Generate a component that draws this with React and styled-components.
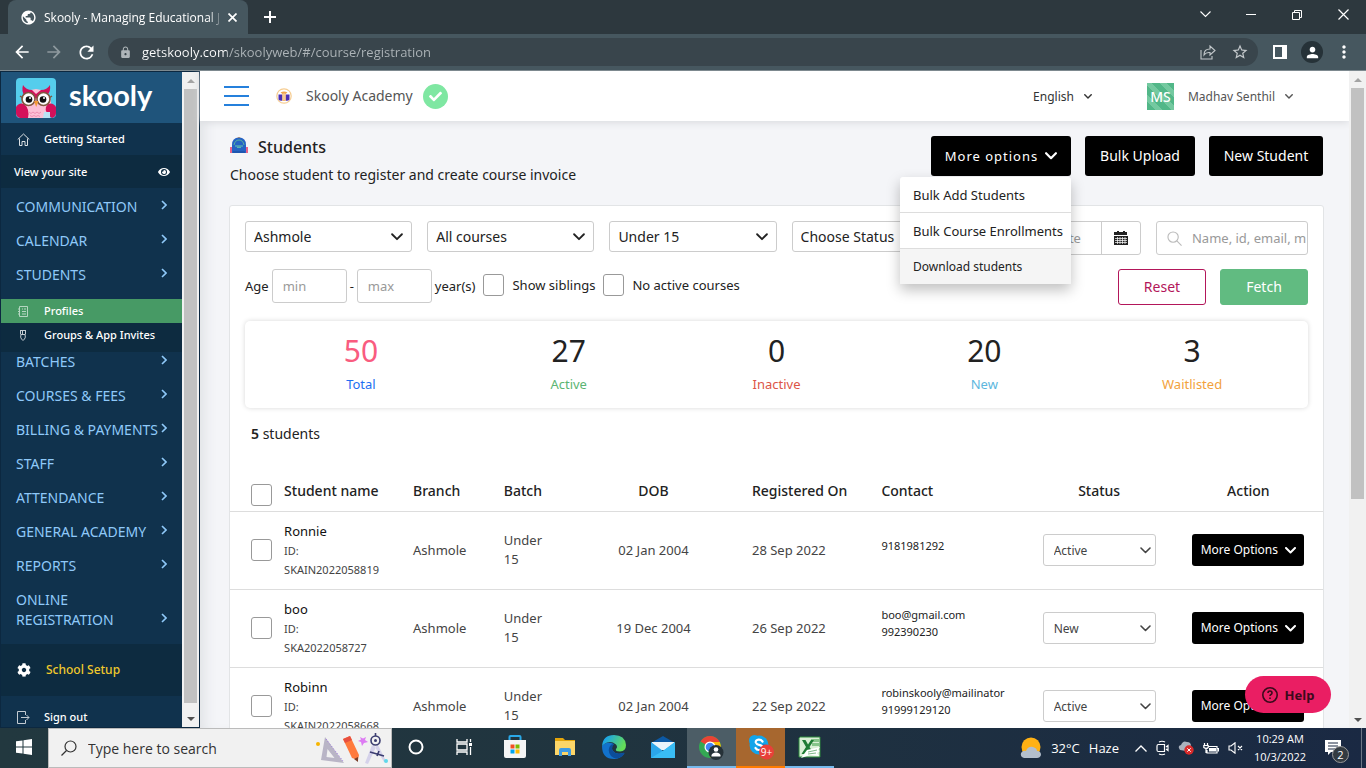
import React from "react";
import styled, { createGlobalStyle, css } from "styled-components";
import {
  MdArrowBack,
  MdArrowForward,
  MdRefresh,
  MdLock,
  MdPublic,
  MdStarBorder,
  MdMoreVert,
  MdPerson,
} from "react-icons/md";
import { FaEye, FaCog, FaCheck } from "react-icons/fa";

const GlobalStyle = createGlobalStyle`
  *, *::before, *::after { box-sizing: border-box; }
  body {
    margin: 0;
    overflow: hidden;
    font-family: "Noto Sans", sans-serif;
    font-size: 13px;
    color: #222;
  }
  button, input, select { font: inherit; color: inherit; margin: 0; }
  button { cursor: pointer; border: 0; background: none; padding: 0; }
  a { color: inherit; text-decoration: none; }
  svg { display: block; flex: none; }
`;

const Desktop = styled.div`
  height: 100vh;
  display: flex;
  flex-direction: column;
  overflow: hidden;
`;

/* ---------- browser frame ---------- */

const systemFont = css`
  font-family: "Open Sans", sans-serif;
`;

const TabStrip = styled.header`
  ${systemFont}
  flex: none;
  height: 34px;
  padding-left: 8px;
  display: flex;
  align-items: stretch;
  background: #2d383e;
  color: #fff;
`;

const Tab = styled.div`
  width: 240px;
  padding: 0 10px 0 12px;
  display: flex;
  align-items: center;
  gap: 7px;
  font-size: 12px;
  background: #46575f;
  border-radius: 8px 8px 0 0;
`;

const TabTitle = styled.span`
  flex: 1;
  overflow: hidden;
  white-space: nowrap;
  mask-image: linear-gradient(90deg, #000 164px, transparent 180px);
`;

const FrameButton = styled.button`
  width: ${(p) => p.$w || 46}px;
  display: flex;
  align-items: center;
  justify-content: center;
  color: ${(p) => p.$color || "#fff"};
`;

const WindowButtons = styled.div`
  margin-left: auto;
  display: flex;
  height: 29px;
`;

const Toolbar = styled.div`
  flex: none;
  height: 37px;
  padding: 0 6px 0 6px;
  display: flex;
  align-items: center;
  background: #46575f;
  border-bottom: 1px solid #7d898f;
`;

const AddressBar = styled.label`
  ${systemFont}
  flex: 1;
  height: 28px;
  margin: 0 6px 0 6px;
  padding: 0 2px 0 11px;
  display: flex;
  align-items: center;
  gap: 10px;
  border-radius: 14px;
  background: #39454c;
  color: #aeb5b9;
`;

const AddressInput = styled.input`
  flex: 1;
  min-width: 0;
  border: 0;
  padding: 0;
  outline: 0;
  font-size: 13px;
  color: transparent;
  background: linear-gradient(90deg, #fff 85px, #aeb5b9 85px);
  background-clip: text;
`;

const AddressActions = styled.span`
  display: flex;
`;

const ProfileDisc = styled.span`
  width: 22px;
  height: 22px;
  display: grid;
  place-items: center;
  border-radius: 50%;
  background: #263238;
`;

/* ---------- page ---------- */

const Viewport = styled.div`
  flex: 1;
  min-height: 0;
  display: flex;
  position: relative;
  overflow: hidden;
  background: #f4f5f8;
`;

const SidebarFrame = styled.aside`
  flex: none;
  width: 200px;
  display: flex;
  border: 1px solid #0c2840;
  background: #10324d;
`;

const SidebarScroll = styled.nav`
  flex: 1;
  min-width: 0;
  overflow: hidden;
  color: #fff;
`;

const Brand = styled.a`
  height: 51px;
  padding: 0 15px;
  display: flex;
  align-items: center;
  gap: 13px;
  background: #1f547b;
  font-family: Lato, sans-serif;
  font-size: 29px;
  font-weight: 700;
  line-height: 40px;
  color: #fff;
`;

const BrandName = styled.span`
  padding-bottom: 6px;
`;

const SideLink = styled.a`
  height: ${(p) => p.$h || 32}px;
  padding: 0 12px 0 ${(p) => p.$pad || 16}px;
  display: flex;
  align-items: center;
  gap: ${(p) => p.$gap || 15}px;
  font-size: ${(p) => p.$size || 11}px;
  line-height: 16px;
  font-weight: 500;
  color: ${(p) => p.$color || "#fff"};
  background: ${(p) => p.$bg || "transparent"};
`;

const SideIcon = styled.span`
  width: 12px;
  display: flex;
  justify-content: center;
`;

const Spread = styled.span`
  flex: 1;
`;

const Menu = styled.div`
  padding-top: 9px;
`;

const MenuGroup = styled.button`
  width: 100%;
  padding: 0 15px 14px 15px;
  display: flex;
  align-items: flex-end;
  justify-content: space-between;
  text-align: left;
  font-size: 14px;
  line-height: 20px;
  white-space: nowrap;
  color: #8fc9f9;

  svg { margin-bottom: 7px; }
`;

const MenuLabel = styled.span`
  width: 128px;
  white-space: ${(p) => (p.$wrap ? "normal" : "nowrap")};
`;

const SubMenu = styled.div`
  padding-bottom: 5px;
  background: #0d2b40;
`;

const Track = styled.div`
  flex: none;
  width: 17px;
  display: flex;
  flex-direction: column;
  align-items: center;
  justify-content: space-between;
  background: #f1f1f1;
`;

const Thumb = styled.div`
  width: 13px;
  flex: 0 0 ${(p) => p.$size};
  margin-bottom: auto;
  background: #c1c1c1;
`;

const TrackEnd = styled.span`
  height: 17px;
  display: grid;
  place-items: center;
`;

const Main = styled.main`
  flex: 1;
  min-width: 0;
  box-shadow: inset 12px 0 14px -8px #dfe1e4;
`;

const TopBar = styled.header`
  height: 50px;
  padding: 0 56px 0 24px;
  display: flex;
  align-items: center;
  background: #fff;
  box-shadow: 0 1px 8px #d5d7da;
`;

const Academy = styled.div`
  margin-left: 27px;
  display: flex;
  align-items: center;
  gap: 14px;
  font-size: 14px;
  line-height: 18px;
  color: #555;
`;

const Verified = styled.span`
  width: 25px;
  height: 25px;
  margin-left: -4px;
  display: grid;
  place-items: center;
  border-radius: 50%;
  background: #7fe7a2;
  color: #fff;
`;

const TopChoice = styled.button`
  display: flex;
  align-items: center;
  gap: 10px;
  font-size: 12px;
  color: ${(p) => p.$color};
`;

const Avatar = styled.span`
  width: 27px;
  height: 27px;
  margin: 0 14px 0 55px;
  display: grid;
  place-items: center;
  font-size: 14px;
  font-weight: 500;
  color: #fff;
  background: repeating-linear-gradient(45deg, #52b788 0 6px, #74c9a0 6px 11px);
`;

const Page = styled.div`
  padding: 15px 25px 0 29px;
`;

const PageHead = styled.div`
  height: 69px;
  padding: 0 1px;
  display: flex;
  justify-content: space-between;
`;

const Title = styled.h1`
  margin: 0;
  display: flex;
  align-items: center;
  gap: 10px;
  font-size: 16px;
  line-height: 22px;
  font-weight: 500;

  svg { margin-bottom: 4px; }
`;

const Subtitle = styled.p`
  margin: 6px 0 0;
  font-size: 14px;
  line-height: 22px;
`;

const HeadActions = styled.div`
  display: flex;
  align-items: flex-start;
  gap: 14px;
`;

const BlackButton = styled.button`
  height: ${(p) => (p.$small ? 32 : 40)}px;
  width: ${(p) => p.$w}px;
  display: inline-flex;
  align-items: center;
  justify-content: center;
  gap: 7px;
  border-radius: 3px;
  font-size: ${(p) => (p.$small ? 12 : p.$spaced ? 13 : 14)}px;
  line-height: 18px;
  letter-spacing: ${(p) => (p.$spaced ? "1px" : "normal")};
  white-space: nowrap;
  color: #fff;
  background: #000;
`;

const MenuAnchor = styled.div`
  position: relative;
`;

const DropMenu = styled.ul`
  position: absolute;
  z-index: 2;
  top: 41px;
  right: 0;
  width: 171px;
  margin: 0;
  padding: 0;
  list-style: none;
  border-radius: 3px;
  background: #fff;
  box-shadow: 0 6px 14px rgba(0, 0, 0, 0.25);
`;

const DropItem = styled.li`
  border-bottom: ${(p) => (p.$active ? "0" : "1px solid #ddd")};
  background: ${(p) => (p.$active ? "#f5f5f5" : "transparent")};

  button {
    display: block;
    width: 100%;
    height: 35px;
    padding: 0 13px;
    text-align: left;
    white-space: nowrap;
    line-height: 16px;
    font-size: ${(p) => (p.$active ? 12 : 13)}px;
  }
`;

const Card = styled.section`
  border: 1px solid #e2e4e6;
  border-radius: 3px;
  background: #fff;
`;

const Filters = styled.form`
  padding: 15px 15px 0;
  display: flex;
  flex-direction: column;
  gap: 14px;
`;

const FilterGrid = styled.div`
  display: grid;
  grid-template-columns: repeat(5, 11fr) 10fr;
  gap: 15px;
  height: 34px;
  align-items: start;
`;

const SelectWrap = styled.span`
  position: relative;
  display: block;
  width: ${(p) => p.$w || "100%"};
  margin: 0 auto;

  svg {
    position: absolute;
    right: ${(p) => (p.$small ? 5 : 9)}px;
    top: ${(p) => (p.$small ? 13 : 12)}px;
    pointer-events: none;
  }
`;

const Select = styled.select`
  appearance: none;
  display: block;
  width: 100%;
  height: ${(p) => (p.$small ? 32 : 31)}px;
  padding: 0 8px 0 ${(p) => (p.$small ? 10 : 8)}px;
  border: 1px solid #ccc;
  border-radius: 3px;
  font-size: ${(p) => (p.$small ? 12 : 14)}px;
  background: #fff;
`;

const Field = styled.label`
  display: flex;
  align-items: center;
  height: 34px;
  width: ${(p) => p.$w || "auto"};
  border: 1px solid #ccc;
  border-radius: 3px;
  background: #fff;
  overflow: hidden;

  > svg { margin-left: 10px; color: #bbb; }

  input {
    flex: 1;
    min-width: 0;
    width: 100%;
    height: 100%;
    padding: 0 0 0 10px;
    border: 0;
    outline: 0;
    background: none;
  }
  input::placeholder { color: #999; opacity: 1; }

  button {
    width: 39px;
    height: 100%;
    display: grid;
    place-items: center;
    border-left: 1px solid #ccc;
  }
`;

const FilterRow = styled.div`
  height: 36px;
  display: flex;
  align-items: flex-start;
`;

const AgeGroup = styled.div`
  height: 34px;
  display: flex;
  align-items: center;
  gap: 3px;
  font-size: 13px;
`;

const CheckLabel = styled.label`
  height: 32px;
  margin-left: 8px;
  display: flex;
  align-items: center;
  gap: 8px;
  font-size: 13px;
`;

const Check = styled.input.attrs({ type: "checkbox" })`
  appearance: none;
  display: block;
  width: 21px;
  height: 22px;
  border: 1px solid #999;
  border-radius: 3px;
  background: #fff;
`;

const FormButtons = styled.div`
  margin-left: auto;
  display: flex;
  gap: 14px;
`;

const FormButton = styled.button`
  width: 88px;
  height: 36px;
  border-radius: 3px;
  font-size: 14px;
  line-height: 18px;
  border: 1px solid ${(p) => (p.$solid ? "#61bb81" : "#b3165a")};
  color: ${(p) => (p.$solid ? "#fff" : "#b3165a")};
  background: ${(p) => (p.$solid ? "#61bb81" : "#fff")};
`;

const Stats = styled.div`
  margin: 16px 15px 0;
  height: 87px;
  padding: 10px 12px 0;
  display: grid;
  grid-template-columns: repeat(5, 1fr);
  border-radius: 5px;
  background: #fff;
  box-shadow: 0 0 5px #d8d8d8;
  text-align: center;
`;

const StatValue = styled.div`
  font-size: 30px;
  line-height: 40px;
  color: ${(p) => p.$color || "#222"};
`;

const StatLabel = styled.div`
  margin-top: 3px;
  font-size: 13px;
  line-height: 20px;
  color: ${(p) => p.$color};
`;

const Count = styled.p`
  margin: 16px 0 26px 21px;
  font-size: 14px;
  line-height: 20px;

  b { font-weight: 600; }
`;

const Table = styled.table`
  width: 100%;
  table-layout: fixed;
  border-collapse: collapse;
  text-align: left;

  th {
    height: 41px;
    padding: 0;
    border-bottom: 1px solid #ddd;
    font-size: 14px;
    font-weight: 500;
    white-space: nowrap;
  }
  td {
    height: 78px;
    padding: 0;
    border-bottom: 1px solid #ddd;
    font-size: 13px;
    line-height: 19px;
    color: #444;
  }
  th.check { padding: 10px 0 0 21px; }
  td.check { padding-left: 21px; }
  .center { text-align: center; }
  th.registered, td.registered { padding-left: 40px; }
  td.batch { padding-right: 40px; }
`;

const StudentName = styled.a`
  display: block;
  color: #111;
`;

const StudentId = styled.span`
  display: block;
  width: 100px;
  font-size: 11px;
`;

const Contact = styled.div`
  width: 127px;
  padding-bottom: 10px;
  overflow: hidden;
  font-size: 11px;
  line-height: 17px;
  color: #222;
`;

const HelpButton = styled.button`
  position: absolute;
  z-index: 3;
  right: 35px;
  bottom: 15px;
  width: 86px;
  height: 37px;
  display: flex;
  align-items: center;
  justify-content: center;
  gap: 7px;
  border-radius: 19px;
  font-size: 13px;
  font-weight: 700;
  color: #3b0a1c;
  background: #ea1e63;
`;

/* ---------- taskbar ---------- */

const Taskbar = styled.footer`
  ${systemFont}
  flex: none;
  height: 40px;
  display: flex;
  align-items: stretch;
  color: #fff;
  background: linear-gradient(90deg, #22383f 0%, #20343f 45%, #1a2943 100%);
`;

const TaskItem = styled.button`
  width: ${(p) => p.$w || 49}px;
  display: grid;
  place-items: center;
  background: ${(p) => p.$bg || "transparent"};
  border-bottom: 2px solid ${(p) => p.$line || "transparent"};
`;

const TaskSearch = styled.label`
  width: 344px;
  padding: 0 2px 0 12px;
  display: flex;
  align-items: center;
  gap: 11px;
  color: #333;
  background: #f1f1f1;
  border: 1px solid #bbb;

  input {
    flex: 1;
    min-width: 0;
    padding: 0;
    border: 0;
    outline: 0;
    font-size: 14px;
    background: none;
  }
  input::placeholder { color: #333; opacity: 1; }
`;

const Tray = styled.div`
  margin-left: auto;
  display: flex;
  align-items: center;
`;

const Weather = styled.button`
  display: flex;
  align-items: center;
  gap: 9px;
  margin-right: 16px;
  font-size: 13px;
`;

const TrayIcons = styled.div`
  display: flex;
  align-items: center;
  gap: 9px;
`;

const Clock = styled.time`
  width: 74px;
  text-align: center;
  font-size: 11px;
  line-height: 18px;
`;

const Notice = styled.button`
  position: relative;
  width: 38px;
  height: 40px;
  padding: 12px 0 0 8px;
  display: flex;
  align-items: flex-start;
`;

const NoticeBadge = styled.span`
  position: absolute;
  left: 15px;
  top: 18px;
  width: 17px;
  height: 17px;
  border: 1px solid #999;
  border-radius: 50%;
  font-size: 11px;
  line-height: 15px;
  text-align: center;
  background: #333b42;
`;

const ShowDesktop = styled.span`
  width: 5px;
  height: 40px;
  margin-left: 6px;
  border-left: 1px solid #6b7685;
`;

/* ---------- drawings ---------- */

const Line = ({ w, h, box, d, sw = 1.5, children, ...rest }) => (
  <svg
    width={w}
    height={h}
    viewBox={box || `0 0 ${w} ${h}`}
    fill="none"
    stroke="currentColor"
    strokeWidth={sw}
    {...rest}
  >
    {d && <path d={d} />}
    {children}
  </svg>
);

const Down = ({ w = 11, h = 7, sw = 2 }) => (
  <Line w={w} h={h} box="0 0 11 7" sw={sw} d="M1 1l4.5 4.5L10 1" strokeLinecap="round" strokeLinejoin="round" />
);

const Owl = () => (
  <svg width="40" height="40" viewBox="0 0 40 40">
    <rect width="40" height="40" rx="4" fill="#55cdec" />
    <path d="M7 19Q8 12 20 11Q32 12 34 19Q37 27 33 40H7Q4 27 7 19z" fill="#fcc0d6" />
    <path d="M0 29Q3 24 8 26Q14 31 12 40H4Q0 39 0 35z" fill="#d3105a" />
    <path d="M40 29Q37 24 32 26Q27 31 33 38L36 40Q40 39 40 35z" fill="#d3105a" />
    <path d="M28 34h6v6h-7z" fill="#b9e3f5" />
    <path d="M7 7Q10 12 16 12L20 16L25 12Q31 12 34 7Q35 14 31 17Q25 13 20 21Q15 13 9 18Q5 14 7 7z" fill="#d3105a" />
    <circle cx="12.500" cy="21" r="6.500" fill="#fff" stroke="#80573f" strokeWidth="1.6" />
    <circle cx="27.500" cy="21" r="6.500" fill="#fff" stroke="#80573f" strokeWidth="1.6" />
    <circle cx="13" cy="21.500" r="3.300" fill="#111" />
    <circle cx="27" cy="21.500" r="3.300" fill="#111" />
    <circle cx="14" cy="20" r="1" fill="#fff" />
    <circle cx="28" cy="20" r="1" fill="#fff" />
    <path d="M4 18l3 2M36 18l-3 2" stroke="#80573f" strokeWidth="1.500" />
    <path d="M18 23h4.500l-2.300 6z" fill="#f49a35" />
    <path d="M13 34l2 1.500 2-1.500 2 1.500 2-1.500 2 1.500 2-1.500M14 37.500l2 1 2-1 2 1 2-1 2 1" fill="none" stroke="#ee8fb2" />
  </svg>
);

const AcademyMark = () => (
  <svg width="16" height="16" viewBox="0 0 16 16">
    <circle cx="8" cy="8" r="7.200" fill="#fff" stroke="#f6cd92" strokeWidth="1.200" />
    <path d="M2.500 6.500h3.800v6.200q-2.600.5-3.800-1.200z" fill="#4b2fb5" />
    <path d="M9.700 6.500h3.800v5q-1.200 1.700-3.800 1.200z" fill="#4b2fb5" />
    <path d="M4.500 4.500Q8 2.500 11.500 4.500L9.500 6v7h-3V6z" fill="#f1a54e" />
    <path d="M8 5.500v7" stroke="#fff" strokeWidth=".8" />
  </svg>
);

const Backpack = () => (
  <svg width="18" height="18" viewBox="0 0 18 18">
    <path d="M6.500 3Q9-1 11.500 3z" fill="#f29a38" />
    <path d="M0 11h3v6H0zM15 11h3v6h-3z" fill="#e8638a" />
    <path d="M2 17V9Q2 1.500 9 1.500T16 9V17z" fill="#2563c4" />
    <path d="M4 9Q5 4 9 4T14 9" fill="none" stroke="#58b59a" />
    <path d="M5 10h8M7 11.300h4" stroke="#67cbaa" />
    <path d="M3 16h12" stroke="#1a4a9c" />
  </svg>
);

const HomeIcon = () => (
  <Line w={13} h={13} sw={1} opacity="0.85" d="M.7 6.500L6.500 1l5.800 5.500M2.500 5.500v7H5V8.500h3v4h2.500v-7" />
);
const ListIcon = () => (
  <Line w={10} h={11} sw={1} opacity="0.6" d="M1.500.5h8v10h-8zM0 3h2M0 5.500h2M0 8h2M4 3h1M6 3h2M4 5.500h4M4 8h4" />
);
const MedalIcon = () => (
  <Line w={8} h={11} sw={1} opacity="0.75" d="M1.500 0v4.500M6.500 0v4.500M3.500 0v4M1 .5h6M2 4.500q-1 3 .5 4.500L4 10.500 5.500 9q1.500-1.500.5-4.500z" />
);
const ExitIcon = () => (
  <Line w={13} h={13} sw={1} opacity="0.75" d="M8.500 4V.5h-8v12h8V9M4 6.500h8M9.500 4L12 6.500 9.500 9" />
);
const CalendarIcon = () => (
  <svg width="14" height="15" viewBox="0 0 14 15">
    <path d="M1 1h2V0h2v1h4V0h2v1h2v3H0V1zM0 5h14v9H0z" fill="#222" />
    <path d="M1 7.500h12M1 9.500h12M1 11.500h12M3.500 6v7M6 6v7M8.500 6v7M11 6v7" stroke="#fff" strokeWidth=".7" />
  </svg>
);

const Magnifier = ({ size = 16, flip }) => (
  <Line w={size} h={size} box="0 0 16 16" sw={1.2} transform={flip ? "scale(-1 1)" : undefined}>
    <circle cx="6.500" cy="6.500" r="5.500" />
    <path d="M10.500 10.500L15.500 15.500" />
  </Line>
);

const WindowsLogo = () => (
  <svg width="16" height="16" viewBox="0 0 16 16" fill="#fff">
    <path d="M0 2.300L6.500 1.400V7.500H0zM7.500 1.200L16 0V7.500H7.500zM0 8.500H6.500V14.600L0 13.700zM7.500 8.500H16V16L7.500 14.800z" />
  </svg>
);

const DeskArt = () => (
  <svg width="74" height="34" viewBox="0 0 74 34">
    <circle cx="3" cy="13" r="2" fill="#f7b500" />
    <path d="M10 6L29 32 6 29zM12.500 18l-1 8 8 1z" fill="#b9b5c6" fillRule="evenodd" />
    <path d="M11 8L28 30" stroke="#9a6fe0" strokeDasharray="1 2" />
    <path d="M28 8l7-3 9 19-1 5-6-2z" fill="#ff7a3d" />
    <path d="M28 8l7-3 2 4-7 3z" fill="#e8503f" />
    <path d="M39 28l4-2 0 5z" fill="#7a3d28" />
    <path d="M45 6l3 1.500 3-1.500-1 3 3 2-4 1-2 3-1-4-3-1 3-1.500z" fill="#dd7cf3" />
    <path d="M57 14L50 32l3 1 8-17zM63 14l8 16-2 1-9-15z" fill="#d5d2ea" />
    <circle cx="60.500" cy="9.500" r="4.500" fill="none" stroke="#3b3d70" strokeWidth="1.600" />
    <circle cx="60.500" cy="9.500" r="1.500" fill="#3b3d70" />
    <path d="M60.500 2v3M55 21l14 4M64 20l-2 5" stroke="#3b3d70" strokeWidth="1.600" />
    <circle cx="71" cy="30" r="2" fill="#5fd7ea" />
  </svg>
);

const TaskView = () => (
  <Line w={17} h={16} sw={1.3} d="M1 0v3h10V0M1 16v-3h10v3M1 5h10v6H1zM14.500 0v3M14.500 8v8">
    <path d="M13 4h3v3h-3z" fill="#fff" stroke="none" />
  </Line>
);

const Store = () => (
  <svg width="24" height="24" viewBox="0 0 24 24">
    <path d="M6.500 6V2q0-1 1-1h9q1 0 1 1v4" fill="none" stroke="#2aa9e8" strokeWidth="2" />
    <path d="M1 5h22v16q0 2-2 2H3q-2 0-2-2z" fill="#f5f5f5" />
    <path d="M7.500 9.500h4v4h-4z" fill="#f25022" />
    <path d="M12.500 9.500h4v4h-4z" fill="#7fba00" />
    <path d="M7.500 14.500h4v4h-4z" fill="#00a4ef" />
    <path d="M12.500 14.500h4v4h-4z" fill="#ffb900" />
  </svg>
);

const Folder = () => (
  <svg width="22" height="20" viewBox="0 0 22 20">
    <path d="M1 1h8l2 2h10v6H1z" fill="#e5a50a" />
    <path d="M1 4h20v14H1z" fill="#fdd668" />
    <path d="M5 19v-6q0-2 2-2h8q2 0 2 2v6h-3v-4H8v4z" fill="#3f9be3" />
  </svg>
);

const Edge = () => (
  <svg width="24" height="24" viewBox="0 0 24 24">
    <defs>
      <linearGradient id="edgeTop" x1="0" y1="0" x2="1" y2=".4">
        <stop offset="0.200" stopColor="#1ba5e8" />
        <stop offset="1" stopColor="#64dc58" />
      </linearGradient>
    </defs>
    <path d="M0 11Q0 24 12 24Q18 24 22 19Q23 17 21 18Q14 20 11 16Q8 12 12 9Q5 5 0 11z" fill="#1272cc" />
    <path d="M8 11Q5 16 9 21Q13 25 18 22.500Q21 21 22 19Q23 17 21 18Q14 20 11 16Q9 13 12 9Q9 9 8 11z" fill="#0c4d9a" />
    <path d="M0 11Q1 0 12 0Q23 0 24 10Q24 16 18 16.500Q13 16.500 14 14Q16 12 14 9.500Q7 4 0 11z" fill="url(#edgeTop)" />
  </svg>
);

const Mail = () => (
  <svg width="24" height="22" viewBox="0 0 24 22">
    <path d="M0 7L12 0l12 7v5H0z" fill="#0c59a4" />
    <path d="M1 6h22v8H1z" fill="#e9f4fb" />
    <path d="M0 6l12 9 12-9v16H0z" fill="#2ba6ea" />
    <path d="M0 22l14-8.500L24 6v16z" fill="#39bdf5" />
  </svg>
);

const ChromeLogo = () => (
  <svg width="25" height="25" viewBox="0 0 25 25">
    <circle cx="11" cy="12" r="11" fill="#34a853" />
    <path d="M1.500 6.500Q5 1 11 1T20.500 6.500L16 12H11z" fill="#ea4335" />
    <path d="M11 7h9.800Q24 15 18 20L11 23L16 13z" fill="#fbbc05" />
    <circle cx="11" cy="12" r="5.500" fill="#fff" />
    <circle cx="11" cy="12" r="4.300" fill="#4285f4" />
    <circle cx="17" cy="17.500" r="7.500" fill="#263238" />
    <circle cx="17" cy="14.500" r="2.300" fill="#fff" />
    <path d="M12.500 21.500v-1.500q1-2.500 4.500-2.500t4.500 2.500v1.500z" fill="#fff" />
  </svg>
);

const Skype = () => (
  <svg width="26" height="26" viewBox="0 0 26 26">
    <circle cx="11" cy="11" r="9.500" fill="#12a5ea" />
    <circle cx="6.500" cy="6.500" r="5.500" fill="#12a5ea" />
    <circle cx="15.500" cy="15.500" r="5.500" fill="#0b86d8" />
    <path d="M14.500 7.500Q13 5.500 10.500 5.700 7.500 6 7.800 8.500 8.500 10.500 11 10.800 14.800 11.500 14.500 13.800 14 16 11 16 8.500 16 7.500 14" fill="none" stroke="#fff" strokeWidth="2.200" strokeLinecap="round" />
    <circle cx="18.500" cy="18" r="7.500" fill="#e8403a" />
    <text x="18.500" y="22" fontSize="10" fill="#fff" textAnchor="middle">9+</text>
  </svg>
);

const Excel = () => (
  <svg width="23" height="23" viewBox="0 0 23 23">
    <path d="M2 1h20v20H1V2z" fill="#d9efd6" stroke="#2d8a3d" />
    <path d="M13 3h8v3h-8zM14 7h7v3h-7z" fill="#86c58a" />
    <path d="M4 4h3.500l2.500 4.500L13 4h3l-4.500 7 4.500 7h-3.500l-2.500-4.500L7 18H3.500l4.500-7z" fill="#1e7b34" />
    <path d="M9 14l13-3-2 3 2 1-3 2 2 3-9-1-9 3z" fill="#fff" />
    <path d="M10 16l9-2M10 18l8-1" stroke="#7fb98a" />
  </svg>
);

const WeatherIcon = () => (
  <svg width="22" height="22" viewBox="0 0 22 22">
    <circle cx="11" cy="10" r="9.500" fill="#ffb114" />
    <path d="M4 21Q0 20 1 16 3 13 6 14 8 9 13 10 17 11 17 14 21 14 21 18 20 21 17 21z" fill="#b3bfcc" />
  </svg>
);

const CameraIcon = () => (
  <Line w={13} h={16} sw={1.2} d="M2.500 4.500h6v7h-6q-1.500 0-1.500-1.500v-4q0-1.500 1.500-1.500zM10 7l2-1.500v5L10 9M3 2q3-1.500 6 0M3 14q3 1.500 6 0" />
);
const CloudIcon = () => (
  <svg width="16" height="14" viewBox="0 0 16 14">
    <path d="M2 9Q-1 5 3 4 5-1 9 1 13 1 13 5L8 10z" fill="#aab2bd" />
    <circle cx="11" cy="9" r="4.700" fill="#d92b2b" />
    <path d="M9.300 7.300l3.400 3.400M12.700 7.300l-3.400 3.400" stroke="#fff" />
  </svg>
);
const BatteryIcon = () => (
  <Line w={16} h={13} sw={1.2} d="M5 4.500h9v6.500H4V8M14.500 6.500h1v3M1.500 1v2M4.500 1v2M.8 3.500h4.400v2q-2 2-4.400 0zM3 7v4">
    <path d="M6 6h7v3.500H6z" fill="#fff" stroke="none" />
  </Line>
);
const MuteIcon = () => (
  <Line w={15} h={12} sw={1.1} d="M1 4h2l4-3.200v10.400L3 8H1zM10 4l4 4M14 4l-4 4" />
);

/* ---------- data ---------- */

const groupsAfter = [
  "BATCHES",
  "COURSES & FEES",
  "BILLING & PAYMENTS",
  "STAFF",
  "ATTENDANCE",
  "GENERAL ACADEMY",
  "REPORTS",
  "ONLINE REGISTRATION",
];

const stats = [
  { value: 50, label: "Total", color: "#1d6ff2", valueColor: "#f95c7f" },
  { value: 27, label: "Active", color: "#5cb573" },
  { value: 0, label: "Inactive", color: "#dc5547" },
  { value: 20, label: "New", color: "#5db7de" },
  { value: 3, label: "Waitlisted", color: "#f2a23c" },
];

const students = [
  { name: "Ronnie", id: "SKAIN2022058819", dob: "02 Jan 2004", reg: "28 Sep 2022", contact: ["9181981292"], status: "Active" },
  { name: "boo", id: "SKA2022058727", dob: "19 Dec 2004", reg: "26 Sep 2022", contact: ["boo@gmail.com", "992390230"], status: "New" },
  { name: "Robinn", id: "SKAIN2022058668", dob: "02 Jan 2004", reg: "22 Sep 2022", contact: ["robinskooly@mailinator", "91999129120"], status: "Active" },
];

const columnShares = ["4.95%", "11.8%", "8.3%", "8.35%", "10.7%", "15.5%", "13.1%", "13.65%", "auto"];

/* ---------- parts ---------- */

const Group = ({ label }) => (
  <MenuGroup type="button">
    <MenuLabel $wrap={label.startsWith("ONLINE")}>{label}</MenuLabel>
    <Line w={6} h={10} sw={1.6} d="M1 1l4 4-4 4" />
  </MenuGroup>
);

const Dropdown = ({ label, value, small, width }) => (
  <SelectWrap $small={small} $w={width}>
    <Select $small={small} aria-label={label} defaultValue={value}>
      <option>{value}</option>
    </Select>
    <Down w={small ? 11 : 12} h={small ? 7 : 8} sw={small ? 1.6 : 1.7} />
  </SelectWrap>
);

const ScrollTrack = ({ size }) => (
  <Track>
    <TrackEnd>
      <svg width="8" height="4"><path d="M0 4l4-4 4 4z" fill="#a3a3a3" /></svg>
    </TrackEnd>
    <Thumb $size={size} />
    <TrackEnd>
      <svg width="8" height="4"><path d="M0 0l4 4 4-4z" fill="#505050" /></svg>
    </TrackEnd>
  </Track>
);

const BrowserFrame = () => (
  <>
    <TabStrip>
      <Tab>
        <MdPublic size={17} />
        <TabTitle>Skooly - Managing Educational J</TabTitle>
        <FrameButton $w={12} aria-label="Close tab">
          <Line w={9} h={9} sw={1.7} d="M.5.5l8 8M8.500.5l-8 8" />
        </FrameButton>
      </Tab>
      <FrameButton $w={44} aria-label="New tab">
        <Line w={12} h={12} sw={2} d="M6 0v12M0 6h12" />
      </FrameButton>
      <WindowButtons>
        <FrameButton aria-label="Search tabs"><Line w={11} h={7} sw={1.1} d="M.5.5l5 5 5-5" /></FrameButton>
        <FrameButton aria-label="Minimize"><Line w={10} h={2} sw={1} d="M0 .5h10" /></FrameButton>
        <FrameButton aria-label="Restore"><Line w={10} h={10} sw={1} d="M.5 2.500h7v7h-7zM2.500 2.500v-2h7v7h-2" /></FrameButton>
        <FrameButton aria-label="Close"><Line w={11} h={11} sw={1.2} d="M.5.5l10 10M10.500.5l-10 10" /></FrameButton>
      </WindowButtons>
    </TabStrip>
    <Toolbar>
      <FrameButton $w={32} aria-label="Back"><MdArrowBack size={20} /></FrameButton>
      <FrameButton $w={32} $color="#8e999e" aria-label="Forward"><MdArrowForward size={20} /></FrameButton>
      <FrameButton $w={32} aria-label="Reload"><MdRefresh size={21} /></FrameButton>
      <AddressBar>
        <MdLock size={13} />
        <AddressInput aria-label="Address" defaultValue="getskooly.com/skoolyweb/#/course/registration" />
        <AddressActions>
          <FrameButton $w={32} $color="#c3c8cb" aria-label="Share">
            <Line w={16} h={15} sw={1.1} d="M1 5v9h11v-3M4 10q0-6 6-6V1l5 4.500-5 4.500V7.500Q6 7 4 10z" />
          </FrameButton>
          <FrameButton $w={32} $color="#c3c8cb" aria-label="Bookmark"><MdStarBorder size={18} /></FrameButton>
        </AddressActions>
      </AddressBar>
      <FrameButton $w={32} aria-label="Side panel">
        <svg width="14" height="14"><path d="M0 0h14v14H0zM2 2v10h7V2z" fill="#fff" fillRule="evenodd" /></svg>
      </FrameButton>
      <FrameButton $w={32} aria-label="Profile">
        <ProfileDisc><MdPerson size={17} /></ProfileDisc>
      </FrameButton>
      <FrameButton $w={32} aria-label="Menu"><MdMoreVert size={20} /></FrameButton>
    </Toolbar>
  </>
);

const Sidebar = () => (
  <SidebarFrame>
    <SidebarScroll>
      <Brand href="#home"><Owl /><BrandName>skooly</BrandName></Brand>
      <SideLink href="#start" $gap={14}><HomeIcon />Getting Started</SideLink>
      <SideLink href="#site" $h={33} $pad={13} $bg="#0d2b40">
        View your site<Spread /><FaEye size={12} />
      </SideLink>
      <Menu>
        <Group label="COMMUNICATION" />
        <Group label="CALENDAR" />
        <Group label="STUDENTS" />
        <SubMenu>
          <SideLink href="#profiles" $h={24} $bg="#479a65"><SideIcon><ListIcon /></SideIcon>Profiles</SideLink>
          <SideLink href="#groups" $h={24}><SideIcon><MedalIcon /></SideIcon>Groups &amp; App Invites</SideLink>
        </SubMenu>
        {groupsAfter.map((label) => <Group key={label} label={label} />)}
      </Menu>
      <SideLink href="#setup" $h={52} $size={12} $bg="#0d2b40" $color="#f0c92c"><FaCog size={14} color="#fff" />School Setup</SideLink>
      <SideLink href="#signout" $h={42} $gap={14}><ExitIcon />Sign out</SideLink>
    </SidebarScroll>
    <ScrollTrack size="614px" />
  </SidebarFrame>
);

const SchoolBar = () => (
  <TopBar>
    <FrameButton $w={25} $color="#2580dc" aria-label="Toggle menu">
      <Line w={25} h={20} sw={2} d="M0 1h25M0 10h25M0 19h25" />
    </FrameButton>
    <Academy>
      <AcademyMark />
      Skooly Academy
      <Verified><FaCheck size={13} /></Verified>
    </Academy>
    <Spread />
    <TopChoice $color="#333">English <Down w={8} h={5} /></TopChoice>
    <Avatar>MS</Avatar>
    <TopChoice $color="#555">Madhav Senthil <Down w={8} h={5} /></TopChoice>
  </TopBar>
);

const FilterForm = () => (
  <Filters onSubmit={(e) => e.preventDefault()}>
    <FilterGrid>
      <Dropdown label="Branch" value="Ashmole" />
      <Dropdown label="Course" value="All courses" />
      <Dropdown label="Batch" value="Under 15" />
      <Dropdown label="Status" value="Choose Status" />
      <Field>
        <input aria-label="Registered date" placeholder="Registered date" />
        <button type="button" aria-label="Open calendar"><CalendarIcon /></button>
      </Field>
      <Field>
        <Magnifier size={15} />
        <input aria-label="Search students" placeholder="Name, id, email, m" />
      </Field>
    </FilterGrid>
    <FilterRow>
      <AgeGroup>
        Age
        <Field $w="75px"><input aria-label="Minimum age" placeholder="min" /></Field>
        -
        <Field $w="75px"><input aria-label="Maximum age" placeholder="max" /></Field>
        year(s)
      </AgeGroup>
      <CheckLabel><Check />Show siblings</CheckLabel>
      <CheckLabel><Check />No active courses</CheckLabel>
      <FormButtons>
        <FormButton type="reset">Reset</FormButton>
        <FormButton type="submit" $solid>Fetch</FormButton>
      </FormButtons>
    </FilterRow>
  </Filters>
);

const StudentTable = () => (
  <Table>
    <colgroup>
      {columnShares.map((width, i) => <col key={i} style={{ width }} />)}
    </colgroup>
    <thead>
      <tr>
        <th className="check"><Check aria-label="Select all students" /></th>
        <th>Student name</th>
        <th>Branch</th>
        <th>Batch</th>
        <th className="center">DOB</th>
        <th className="registered">Registered On</th>
        <th>Contact</th>
        <th className="center">Status</th>
        <th className="center">Action</th>
      </tr>
    </thead>
    <tbody>
      {students.map((s) => (
        <tr key={s.id}>
          <td className="check"><Check aria-label={`Select ${s.name}`} /></td>
          <td>
            <StudentName href="#student">{s.name}</StudentName>
            <StudentId>ID:<br />{s.id}</StudentId>
          </td>
          <td>Ashmole</td>
          <td className="batch">Under 15</td>
          <td className="center">{s.dob}</td>
          <td className="registered">{s.reg}</td>
          <td>
            <Contact>{s.contact.map((c) => <div key={c}>{c}</div>)}</Contact>
          </td>
          <td><Dropdown small width="113px" label={`Status of ${s.name}`} value={s.status} /></td>
          <td className="center">
            <BlackButton $small $w={112}>More Options <Down sw={2} /></BlackButton>
          </td>
        </tr>
      ))}
    </tbody>
  </Table>
);

const StudentsPage = () => (
  <Page>
    <PageHead>
      <div>
        <Title><Backpack />Students</Title>
        <Subtitle>Choose student to register and create course invoice</Subtitle>
      </div>
      <HeadActions>
        <MenuAnchor>
          <BlackButton $w={140} $spaced aria-expanded="true">More options <Down w={12} h={8} /></BlackButton>
          <DropMenu>
            <DropItem><button>Bulk Add Students</button></DropItem>
            <DropItem><button>Bulk Course Enrollments</button></DropItem>
            <DropItem $active><button>Download students</button></DropItem>
          </DropMenu>
        </MenuAnchor>
        <BlackButton $w={110}>Bulk Upload</BlackButton>
        <BlackButton $w={114}>New Student</BlackButton>
      </HeadActions>
    </PageHead>
    <Card>
      <FilterForm />
      <Stats>
        {stats.map((s) => (
          <div key={s.label}>
            <StatValue $color={s.valueColor}>{s.value}</StatValue>
            <StatLabel $color={s.color}>{s.label}</StatLabel>
          </div>
        ))}
      </Stats>
      <Count><b>5</b> students</Count>
      <StudentTable />
    </Card>
  </Page>
);

const WindowsTaskbar = () => (
  <Taskbar>
    <TaskItem $w={48} aria-label="Start"><WindowsLogo /></TaskItem>
    <TaskSearch>
      <Magnifier flip />
      <input aria-label="Search Windows" placeholder="Type here to search" />
      <DeskArt />
    </TaskSearch>
    <TaskItem $w={48} aria-label="Cortana">
      <Line w={16} h={16} sw={2}><circle cx="8" cy="8" r="6.500" /></Line>
    </TaskItem>
    <TaskItem aria-label="Task view"><TaskView /></TaskItem>
    <TaskItem $w={51} aria-label="Store"><Store /></TaskItem>
    <TaskItem aria-label="File Explorer"><Folder /></TaskItem>
    <TaskItem aria-label="Edge"><Edge /></TaskItem>
    <TaskItem aria-label="Mail"><Mail /></TaskItem>
    <TaskItem $bg="#4c5d66" $line="#76b9ed" aria-label="Chrome"><ChromeLogo /></TaskItem>
    <TaskItem $bg="#a7672f" $line="#ff7b00" aria-label="Skype"><Skype /></TaskItem>
    <TaskItem $line="#76b9ed" aria-label="Excel"><Excel /></TaskItem>
    <Tray>
      <Weather><WeatherIcon /><span>32°C</span><span>Haze</span></Weather>
      <TrayIcons>
        <Line w={12} h={7} sw={1.3} d="M.5 6.500l5.500-5.500 5.500 5.500" />
        <CameraIcon />
        <CloudIcon />
        <BatteryIcon />
        <MuteIcon />
      </TrayIcons>
      <Clock>10:29 AM<br />10/3/2022</Clock>
      <Notice aria-label="Notifications">
        <svg width="17" height="16"><path d="M0 0h16v12H6l-3 3v-3H0z" fill="#fff" /><path d="M3 3h10M3 6h10M3 9h7" stroke="#1a2943" /></svg>
        <NoticeBadge>2</NoticeBadge>
      </Notice>
      <ShowDesktop />
    </Tray>
  </Taskbar>
);

export default function App() {
  return (
    <Desktop>
      <GlobalStyle />
      <BrowserFrame />
      <Viewport>
        <Sidebar />
        <Main>
          <SchoolBar />
          <StudentsPage />
        </Main>
        <ScrollTrack size="411px" />
        <HelpButton>
          <Line w={16} h={16} sw={1.6} d="M6 6q0-2 2-2t2 2q0 1-1 1.500t-1 1.500M8 10.500v1.600">
            <circle cx="8" cy="8" r="7.200" />
          </Line>
          Help
        </HelpButton>
      </Viewport>
      <WindowsTaskbar />
    </Desktop>
  );
}
